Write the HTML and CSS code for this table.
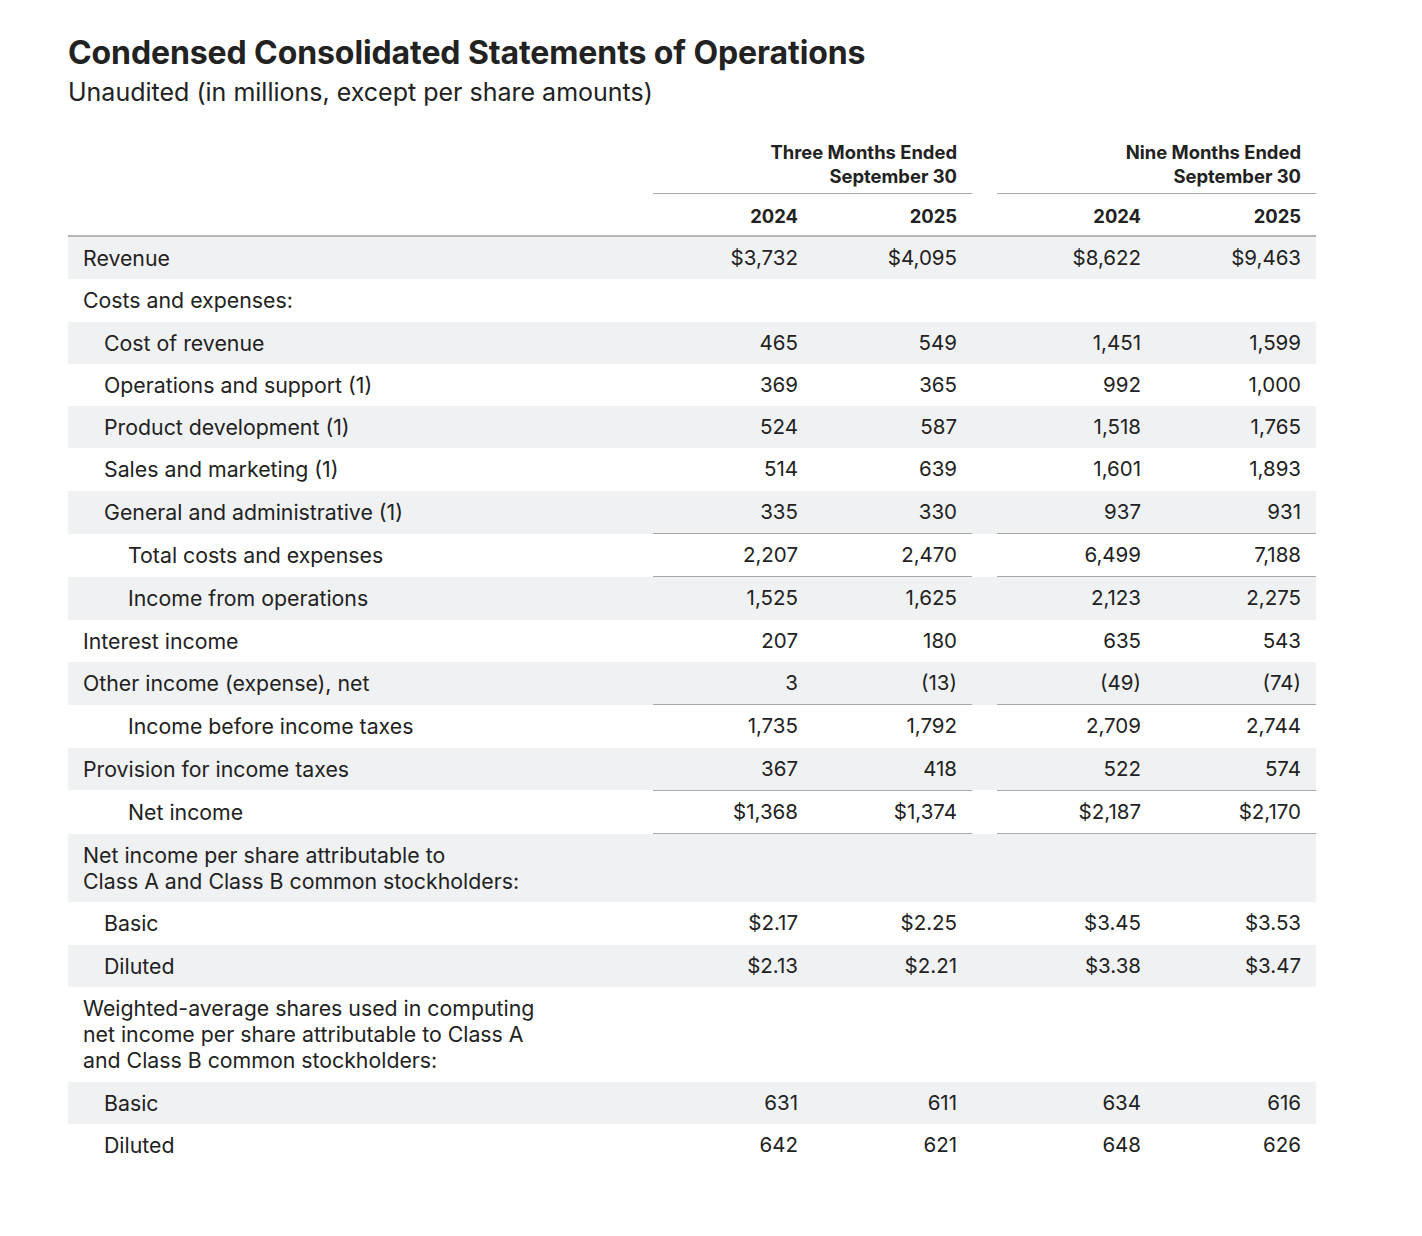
FILE: index.html
```html
<!DOCTYPE html>
<html lang="en">
<head>
<meta charset="utf-8">
<title>Condensed Consolidated Statements of Operations</title>
<link rel="stylesheet" href="styles.css">
</head>
<body>
<main class="page">
  <h1 class="title">Condensed Consolidated Statements of Operations</h1>
  <p class="subtitle">Unaudited (in millions, except per share amounts)</p>

  <table class="fin">
    <colgroup>
      <col class="c-label">
      <col class="c-num1">
      <col class="c-num2">
      <col class="c-gap">
      <col class="c-num2">
      <col class="c-num1">
    </colgroup>
    <thead>
      <tr class="h-period">
        <th></th>
        <th colspan="2" class="period">Three Months Ended<br>September 30</th>
        <th class="gap"></th>
        <th colspan="2" class="period">Nine Months Ended<br>September 30</th>
      </tr>
      <tr class="h-year">
        <th></th>
        <th class="num">2024</th>
        <th class="num">2025</th>
        <th class="gap"></th>
        <th class="num">2024</th>
        <th class="num">2025</th>
      </tr>
    </thead>
    <tbody>
      <tr><td class="lbl">Revenue</td><td class="num">$3,732</td><td class="num">$4,095</td><td class="gap"></td><td class="num">$8,622</td><td class="num">$9,463</td></tr>
      <tr><td class="lbl">Costs and expenses:</td><td class="num"></td><td class="num"></td><td class="gap"></td><td class="num"></td><td class="num"></td></tr>
      <tr><td class="lbl l1">Cost of revenue</td><td class="num">465</td><td class="num">549</td><td class="gap"></td><td class="num">1,451</td><td class="num">1,599</td></tr>
      <tr><td class="lbl l1">Operations and support (1)</td><td class="num">369</td><td class="num">365</td><td class="gap"></td><td class="num">992</td><td class="num">1,000</td></tr>
      <tr><td class="lbl l1">Product development (1)</td><td class="num">524</td><td class="num">587</td><td class="gap"></td><td class="num">1,518</td><td class="num">1,765</td></tr>
      <tr><td class="lbl l1">Sales and marketing (1)</td><td class="num">514</td><td class="num">639</td><td class="gap"></td><td class="num">1,601</td><td class="num">1,893</td></tr>
      <tr><td class="lbl l1">General and administrative (1)</td><td class="num">335</td><td class="num">330</td><td class="gap"></td><td class="num">937</td><td class="num">931</td></tr>
      <tr class="total"><td class="lbl l2">Total costs and expenses</td><td class="num">2,207</td><td class="num">2,470</td><td class="gap"></td><td class="num">6,499</td><td class="num">7,188</td></tr>
      <tr class="total"><td class="lbl l2">Income from operations</td><td class="num">1,525</td><td class="num">1,625</td><td class="gap"></td><td class="num">2,123</td><td class="num">2,275</td></tr>
      <tr><td class="lbl">Interest income</td><td class="num">207</td><td class="num">180</td><td class="gap"></td><td class="num">635</td><td class="num">543</td></tr>
      <tr><td class="lbl">Other income (expense), net</td><td class="num">3</td><td class="num">(13)</td><td class="gap"></td><td class="num">(49)</td><td class="num">(74)</td></tr>
      <tr class="total"><td class="lbl l2">Income before income taxes</td><td class="num">1,735</td><td class="num">1,792</td><td class="gap"></td><td class="num">2,709</td><td class="num">2,744</td></tr>
      <tr><td class="lbl">Provision for income taxes</td><td class="num">367</td><td class="num">418</td><td class="gap"></td><td class="num">522</td><td class="num">574</td></tr>
      <tr class="total grand"><td class="lbl l2">Net income</td><td class="num">$1,368</td><td class="num">$1,374</td><td class="gap"></td><td class="num">$2,187</td><td class="num">$2,170</td></tr>
      <tr><td class="lbl">Net income per share attributable to<br>Class A and Class B common stockholders:</td><td class="num"></td><td class="num"></td><td class="gap"></td><td class="num"></td><td class="num"></td></tr>
      <tr><td class="lbl l1">Basic</td><td class="num">$2.17</td><td class="num">$2.25</td><td class="gap"></td><td class="num">$3.45</td><td class="num">$3.53</td></tr>
      <tr><td class="lbl l1">Diluted</td><td class="num">$2.13</td><td class="num">$2.21</td><td class="gap"></td><td class="num">$3.38</td><td class="num">$3.47</td></tr>
      <tr><td class="lbl">Weighted-average shares used in computing<br>net income per share attributable to Class A<br>and Class B common stockholders:</td><td class="num"></td><td class="num"></td><td class="gap"></td><td class="num"></td><td class="num"></td></tr>
      <tr><td class="lbl l1">Basic</td><td class="num">631</td><td class="num">611</td><td class="gap"></td><td class="num">634</td><td class="num">616</td></tr>
      <tr><td class="lbl l1">Diluted</td><td class="num">642</td><td class="num">621</td><td class="gap"></td><td class="num">648</td><td class="num">626</td></tr>
    </tbody>
  </table>
</main>
</body>
</html>
```

FILE: styles.css
```css
html, body {
  margin: 0;
  padding: 0;
  background: #ffffff;
}

body {
  font-family: "Inter", "Noto Sans", "Liberation Sans", sans-serif;
  color: #222222;
}

.page {
  width: 1248px;
  padding: 33px 0 60px 68px;
}

.title {
  margin: 0;
  font-size: 32px;
  line-height: 40px;
  font-weight: 700;
  letter-spacing: -0.1px;
  color: #222222;
}

.subtitle {
  margin: 4px 0 0;
  font-size: 25px;
  line-height: 30px;
  font-weight: 400;
  color: #222222;
  letter-spacing: 0;
}

.fin {
  margin-top: 33px;
  width: 1248px;
  border-collapse: collapse;
  table-layout: fixed;
  font-size: 20.5px;
}

.c-label { width: 585px; }
.c-num1 { width: 160px; }
.c-num2 { width: 159px; }
.c-gap { width: 25px; }

.fin th {
  font-weight: 700;
  font-size: 18.4px;
  text-align: right;
  padding: 0 15px 0 0;
}

.h-period th {
  line-height: 24px;
  padding-bottom: 5px;
  vertical-align: bottom;
}

.h-period th.period {
  border-bottom: 1px solid #ababab;
}

.h-period th.gap {
  border-bottom: none;
}

.h-year th {
  line-height: 24px;
  padding-top: 10px;
  padding-bottom: 7px;
  border-bottom: 2px solid #b5b5b5;
}

.fin td {
  line-height: 26.3px;
  padding: 8px 15px 8px 0;
  vertical-align: middle;
}

.fin td.lbl {
  text-align: left;
  padding-left: 15px;
  font-size: 21.3px;
}

.fin td.l1 { padding-left: 36px; }
.fin td.l2 { padding-left: 60px; }

.fin td.num {
  text-align: right;
}

.fin td.gap,
.fin th.gap {
  padding: 0;
}

.fin tbody tr:nth-child(odd) {
  background: #f0f1f3;
}

.total td.num {
  border-top: 1px solid #a8a8a8;
}

.grand td.num {
  border-bottom: 1px solid #a8a8a8;
}
```
